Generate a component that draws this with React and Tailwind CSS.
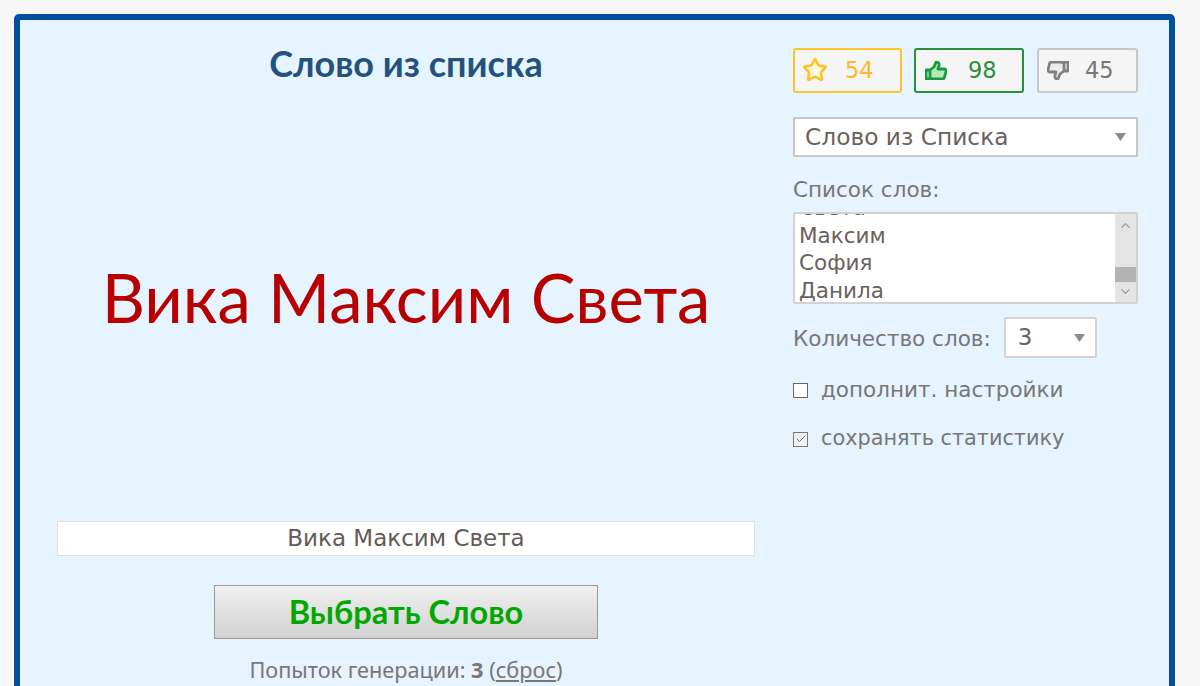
import { Star, ChevronUp, ChevronDown, Check } from 'lucide-react';

const ui = { fontFamily: '"DejaVu Sans", sans-serif' };
const thumb = 'M1 9h4v9H1z M5 9l4-3 2-5c2.500 0 3.500 1.500 3 3.500L13 8h6c1.500 0 2.300 1 2 2.300l-1.600 6.200c-.3 1-1 1.500-2 1.500H9l-4-1z';

function Arrow() {
  return (
    <svg width="11" height="8" viewBox="0 0 11 8" className="shrink-0">
      <path d="M0 0H11L5.500 8Z" fill="#8c8c8c" />
    </svg>
  );
}

function Thumb({ stroke, fill, down }) {
  return (
    <svg width="22" height="19" viewBox="0 0 22 19" className={down ? 'rotate-180' : ''}>
      <path d={thumb} fill={fill} stroke={stroke} strokeWidth="2.800" strokeLinejoin="round" />
    </svg>
  );
}

function VoteButton({ className, icon, count, gap }) {
  return (
    <div className={`h-[45px] flex items-center rounded-[3px] border-2 bg-[#f5f5f5] ${className}`}>
      {icon}
      <span className={`text-[22.500px] ${gap}`}>{count}</span>
    </div>
  );
}

export default function App() {
  return (
    <div className="h-[686px] overflow-hidden bg-[#f7f7f7] pt-[14px] pl-[14px]" style={ui}>
      <div className="flex h-[700px] w-[1161px] rounded-t-[5px] border-[6px] border-[#034f9c] bg-[#e6f4ff] pt-[20px]">
        <div className="ml-[37px] w-[698px] flex flex-col items-center font-['Lato','Noto_Sans',sans-serif]">
          <h1 className="h-[46px] text-[36px] leading-[46px] font-bold text-[#23527c]">Слово из списка</h1>
          <div className="mt-[153px] h-[116px] text-[67px] leading-[116px] text-[#b80000] whitespace-nowrap">Вика Максим Света</div>
          <div className="mt-[166px] h-[35px] w-full border border-[#dedede] bg-white text-center text-[23px] leading-[33px] text-[#655a55]" style={ui}>
            Вика Максим Света
          </div>
          <button className="mt-[29px] h-[54px] w-[384px] border border-[#999] bg-gradient-to-b from-[#f0f0f0] to-[#d2d2d2] text-[32.600px] font-bold text-[#00a800]">
            Выбрать Слово
          </button>
          <p className="mt-[16px] font-['Noto_Sans'] text-[21.700px] leading-[30px] text-[#777]">
            Попыток генерации: <b>3</b> (<span className="underline">сброс</span>)
          </p>
        </div>

        <div className="ml-[38px] w-[345px] pt-[8px] text-[#777]">
          <div className="flex">
            <VoteButton
              className="w-[109px] pl-[7px] border-[#ffc329] text-[#ffb829]"
              icon={<Star size={26} strokeWidth={2.4} className="-mt-[2px] text-[#ffc329] fill-[#fff8dc]" />}
              count="54"
              gap="ml-[17px]"
            />
            <VoteButton
              className="ml-[12px] w-[110px] pl-[9px] border-[#2a8f3c] text-[#2a8f3c]"
              icon={<Thumb stroke="#179a45" fill="#b4e8b8" />}
              count="98"
              gap="ml-[21px]"
            />
            <VoteButton
              className="ml-[13px] w-[101px] pl-[8px] border-[#c8c8c8] text-[#777]"
              icon={<Thumb stroke="#808080" fill="#ececec" down />}
              count="45"
              gap="ml-[16px]"
            />
          </div>

          <div className="mt-[24px] h-[40px] flex items-center justify-between rounded-[1px] border-2 border-[#c8c8c8] bg-white pl-[10px] pr-[10px] text-[23.300px] text-[#6b615c]">
            <span>Слово из Списка</span>
            <Arrow />
          </div>

          <div className="mt-[18px] text-[21.500px] leading-[30px]">Список слов:</div>

          <div className="mt-[7px] h-[92px] flex overflow-hidden rounded-[2px] border-2 border-[#d2d2d2] bg-white">
            <div className="flex-1 pl-[4px] text-[21.500px] leading-[27.500px] text-[#6b615c] -mt-[20px]">
              <div>Света</div>
              <div>Максим</div>
              <div>София</div>
              <div>Данила</div>
            </div>
            <div className="w-[21px] flex flex-col items-center bg-[#e4e4e4]">
              <ChevronUp size={15} className="mt-[4px] text-[#9a9a9a]" />
              <div className="mt-auto mb-[2px] h-[15px] w-full bg-[#b3b3b3]" />
              <ChevronDown size={15} className="mb-[3px] text-[#9a9a9a]" />
            </div>
          </div>

          <div className="mt-[13px] flex items-center text-[21.500px]">
            <span className="pt-[3px]">Количество слов:</span>
            <div className="ml-[13px] h-[41px] w-[93px] flex items-center justify-between rounded-[2px] border-2 border-[#d4d4d4] bg-white pl-[12px] pr-[10px] text-[23px] text-[#6b615c]">
              <span>3</span>
              <Arrow />
            </div>
          </div>

          <div className="mt-[15px] flex h-[34px] items-center text-[21.500px]">
            <span className="h-[15px] w-[15px] border border-[#666] bg-white" />
            <span className="ml-[13px]">дополнит. настройки</span>
          </div>

          <div className="mt-[15px] flex h-[34px] items-center text-[20.800px]">
            <span className="h-[15px] w-[15px] flex items-center justify-center border border-[#777] bg-[#eef3f7]">
              <Check size={12} strokeWidth={1.5} className="text-[#444]" />
            </span>
            <span className="ml-[13px]">сохранять статистику</span>
          </div>
        </div>
      </div>
    </div>
  );
}
